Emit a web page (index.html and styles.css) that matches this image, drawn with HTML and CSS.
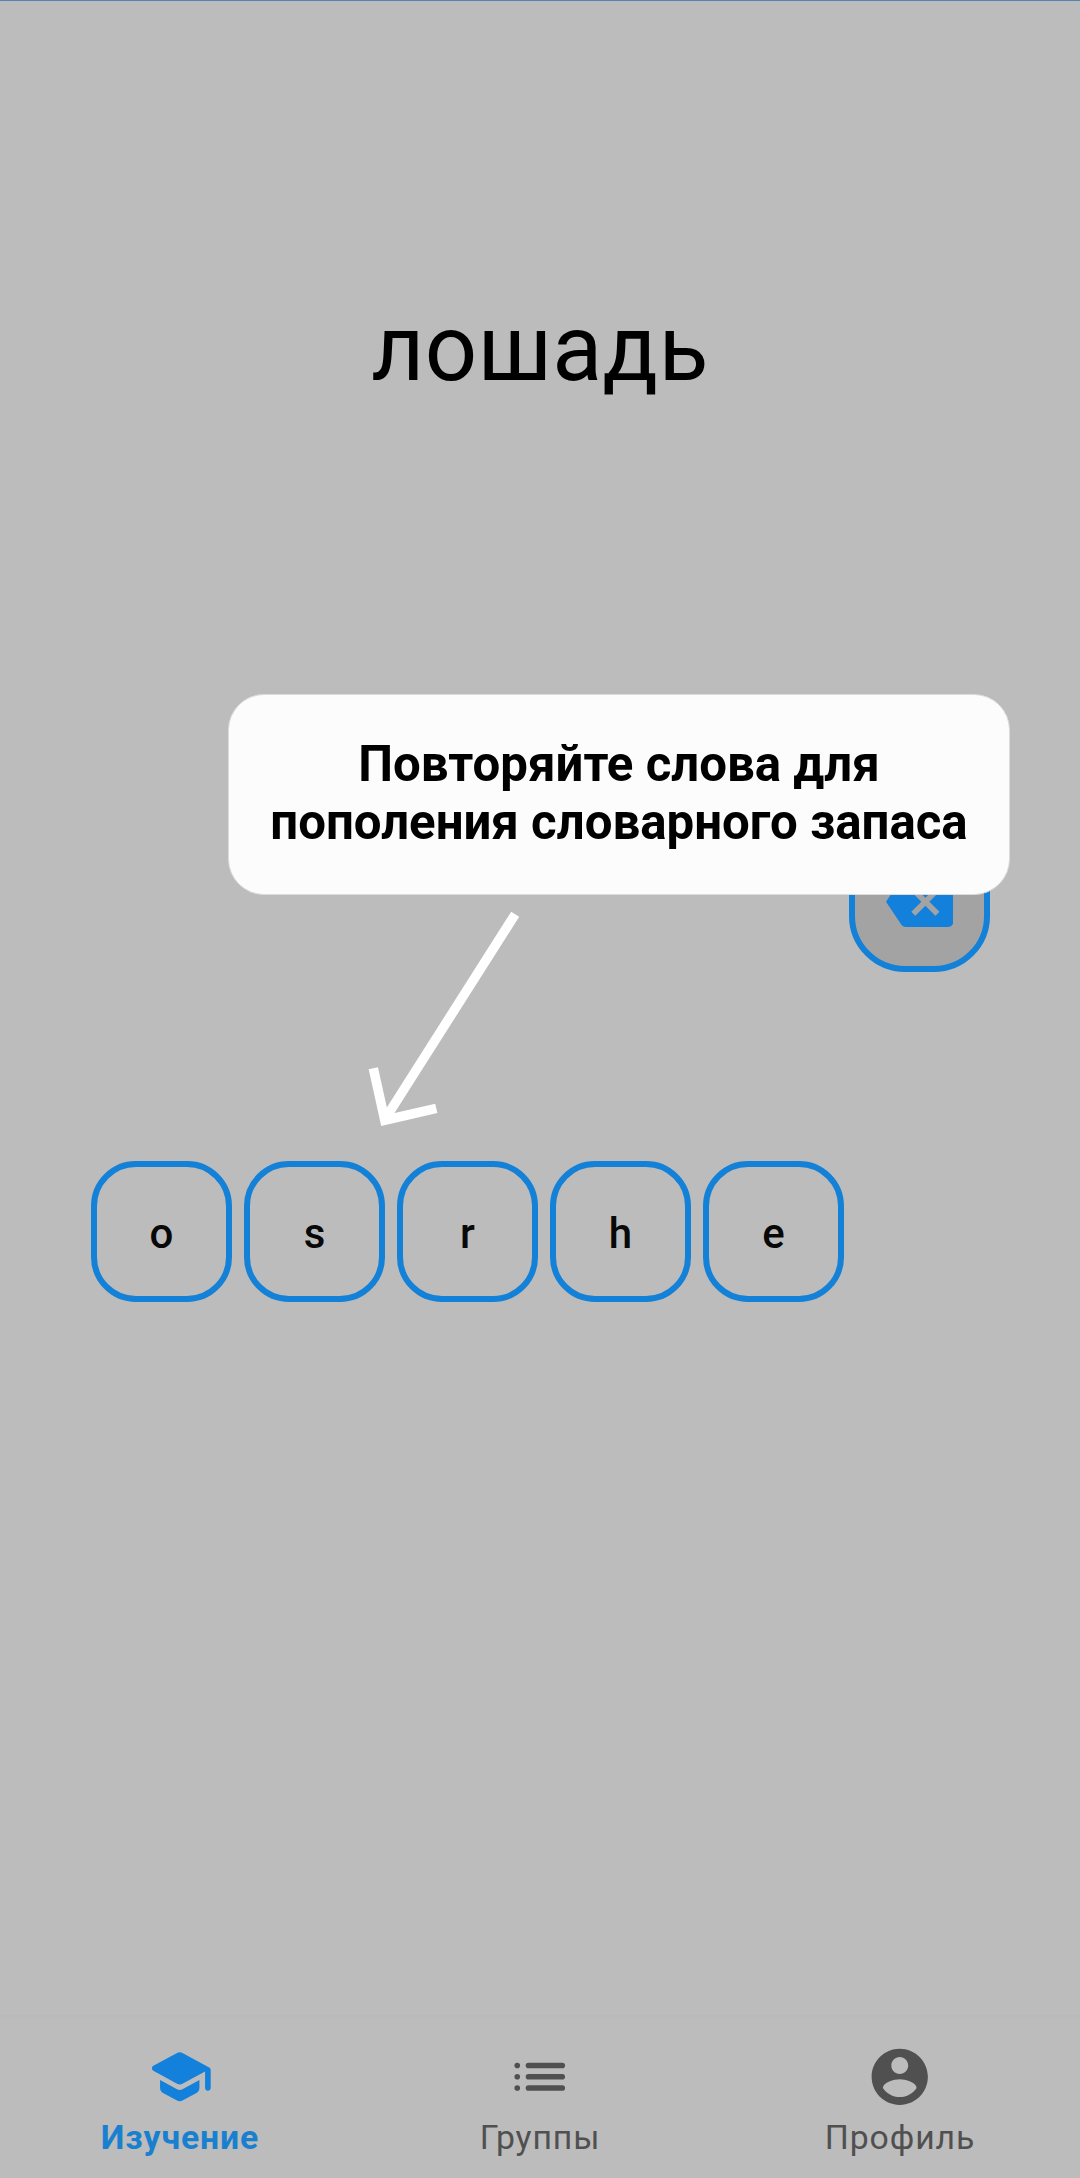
FILE: index.html
```html
<!DOCTYPE html>
<html lang="ru">
<head>
<meta charset="utf-8">
<title>Изучение</title>
<link rel="stylesheet" href="styles.css">
</head>
<body>
<div class="screen">
  <main class="study">
    <h1 class="word">лошадь</h1>
    <div class="answer">
      <button class="key key-erase" aria-label="Стереть">
        <svg class="icon" viewBox="0 0 24 24"><path d="M22 3H7c-.69 0-1.23.35-1.59.88L0 12l5.41 8.11c.36.53.9.89 1.59.89h15c1.1 0 2-.9 2-2V5c0-1.1-.9-2-2-2zm-3 12.59L17.59 17 14 13.41 10.41 17 9 15.59 12.59 12 9 8.41 10.41 7 14 10.59 17.59 7 19 8.41 15.41 12 19 15.59z"/></svg>
      </button>
    </div>
    <div class="keys">
      <button class="key">o</button>
      <button class="key">s</button>
      <button class="key">r</button>
      <button class="key">h</button>
      <button class="key">e</button>
    </div>
  </main>
  <nav class="tabs">
    <a class="tab tab-active">
      <svg class="icon" viewBox="0 0 24 24"><path d="M5 13.18v2.81c0 .73.4 1.41 1.04 1.76l5 2.73c.6.33 1.32.33 1.92 0l5-2.73c.64-.35 1.04-1.03 1.04-1.76v-2.81l-6.04 3.3c-.6.33-1.32.33-1.92 0L5 13.18zm6.04-9.66l-8.43 4.6c-.69.38-.69 1.38 0 1.76l8.43 4.6c.6.33 1.32.33 1.92 0L21 10.09V16c0 .55.45 1 1 1s1-.45 1-1V9.59c0-.37-.2-.7-.52-.88l-9.52-5.19c-.6-.32-1.32-.32-1.92 0z"/></svg>
      <span class="tab-label">Изучение</span>
    </a>
    <a class="tab">
      <svg class="icon" viewBox="0 0 24 24"><circle cx="4" cy="8" r="1"/><circle cx="4" cy="12" r="1"/><circle cx="4" cy="16" r="1"/><rect x="7" y="7" width="14" height="2" rx="1"/><rect x="7" y="11" width="14" height="2" rx="1"/><rect x="7" y="15" width="14" height="2" rx="1"/></svg>
      <span class="tab-label">Группы</span>
    </a>
    <a class="tab">
      <svg class="icon" viewBox="0 0 24 24"><path d="M12 2C6.48 2 2 6.48 2 12s4.48 10 10 10 10-4.48 10-10S17.52 2 12 2zm0 3c1.66 0 3 1.34 3 3s-1.34 3-3 3-3-1.34-3-3 1.34-3 3-3zm0 14.2c-2.5 0-4.71-1.28-6-3.22.03-1.99 4-3.08 6-3.08 1.99 0 5.97 1.09 6 3.08-1.29 1.94-3.5 3.22-6 3.22z"/></svg>
      <span class="tab-label">Профиль</span>
    </a>
  </nav>
  <div class="hint">Повторяйте слова для<br>пополения словарного запаса</div>
  <svg class="hint-arrow" viewBox="0 0 150 220"><path d="M145.2 5.2L17 207M3.3 159.3L14.8 211.2L66.3 199.3"/></svg>
</div>
</body>
</html>
```
FILE: styles.css
```css
* { box-sizing: border-box; }
body {
  margin: 0;
  background: #bcbcbc;
  font-family: Roboto, sans-serif;
}
.screen {
  position: relative;
  display: flex;
  flex-direction: column;
  height: 2178px;
  border-top: 1px solid #5583b3;
}
.study {
  flex: 1;
  display: flex;
  flex-direction: column;
}
.word {
  margin: 295px 0 0;
  height: 106px;
  line-height: 106px;
  text-align: center;
  font-size: 92px;
  font-weight: 400;
  letter-spacing: 0.3px;
  color: #000;
}
.answer {
  display: flex;
  justify-content: flex-end;
  margin-top: 429px;
  padding-right: 90px;
}
.keys {
  display: flex;
  gap: 12px;
  margin-top: 189px;
  padding-left: 91px;
}
.key {
  display: flex;
  align-items: center;
  justify-content: center;
  width: 141px;
  height: 141px;
  padding: 3px 0 0;
  border: 6px solid #1381d8;
  border-radius: 45px;
  background: transparent;
  font: 500 42px Roboto, sans-serif;
  color: #080808;
}
.key-erase {
  padding: 0;
  border-radius: 56px;
  background: #a3a3a3;
  color: #1381dc;
}
.icon {
  display: block;
  width: 67.5px;
  height: 67.5px;
  fill: currentColor;
}
.tabs {
  display: flex;
  height: 163px;
  border-top: 3px solid #bababa;
}
.tab {
  flex: 1;
  display: flex;
  flex-direction: column;
  align-items: center;
  padding-top: 25px;
  color: #505050;
}
.tab-label {
  margin-top: 7px;
  font-size: 33.75px;
  line-height: 40px;
  letter-spacing: 0.9px;
}
.tab-active { color: #1381dc; }
.tab-active .tab-label { font-weight: 700; color: #1980d0; }
.hint {
  position: absolute;
  left: 228px;
  top: 693px;
  width: 782px;
  height: 201px;
  padding-top: 41px;
  border: 1px solid #dcdcdc;
  border-radius: 36px;
  background: #fcfcfc;
  text-align: center;
  font-size: 49.2px;
  font-weight: 700;
  line-height: 57.5px;
  color: #000;
}
.hint-arrow {
  position: absolute;
  left: 370px;
  top: 908px;
  width: 150px;
  height: 220px;
  overflow: visible;
  fill: none;
  stroke: #fff;
  stroke-width: 9.5;
}
```
